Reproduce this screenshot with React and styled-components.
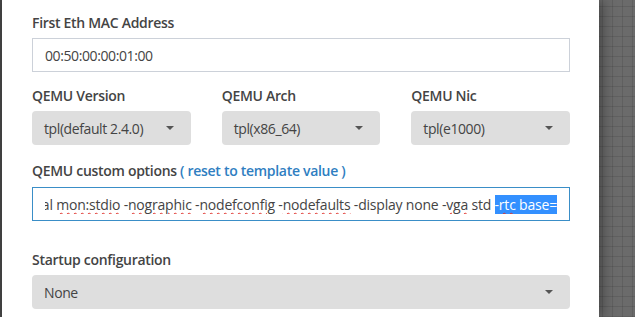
import React from "react";
import styled, { createGlobalStyle } from "styled-components";

const Global = createGlobalStyle`
  html, body { margin: 0; padding: 0; }
  body {
    width: 635px; height: 317px; overflow: hidden;
    font-family: "Open Sans", "Noto Sans", sans-serif;
  }
`;

const Page = styled.div`
  display: flex;
  width: 635px;
  height: 317px;
  background-color: #6b6b6b;
  background-image:
    linear-gradient(to right, rgba(0,0,0,0.10) 1px, transparent 1px),
    linear-gradient(to bottom, rgba(0,0,0,0.10) 1px, transparent 1px);
  background-size: 10px 10px;
  background-position: 2px 6px;
`;

const EdgeStrip = styled.div`
  width: 2px;
  flex: none;
  background: #454545;
`;

const Panel = styled.div`
  width: 597px;
  flex: none;
  background: #fff;
  box-sizing: border-box;
  padding: 13px 29px 0 30px;
  box-shadow: 4px 0 12px rgba(0,0,0,0.35);
  position: relative;
  z-index: 1;
`;

const Group = styled.div`
  margin-bottom: ${(p) => p.$mb ?? 14}px;
`;

const Label = styled.div`
  font-size: 14px;
  font-weight: 600;
  line-height: 20px;
  color: #444;
  margin-bottom: ${(p) => p.$mb ?? 5}px;
  letter-spacing: -0.3px;
`;

const Link = styled.span`
  color: #2f7ec1;
`;

const TextBox = styled.div`
  box-sizing: border-box;
  height: 34px;
  border: 1px solid ${(p) => (p.$focused ? "#3a8ec7" : "#ccd1d9")};
  padding: 0 12px;
  display: flex;
  align-items: center;
  font-size: 14px;
  color: #444;
  letter-spacing: -0.4px;
  background: #fff;
`;

const Scroller = styled.div`
  flex: 1;
  overflow: hidden;
  display: flex;
  justify-content: flex-end;
  white-space: nowrap;
  letter-spacing: -0.2px;
`;

const Spell = styled.span`
  text-decoration: underline wavy #e0302a;
  text-decoration-thickness: 1px;
  text-underline-offset: 2px;
`;

const Selected = styled.span`
  background: #3390ff;
  color: #fff;
`;

const Row = styled.div`
  display: grid;
  grid-template-columns: repeat(3, 1fr);
  column-gap: 31px;
`;

const Select = styled.div`
  box-sizing: border-box;
  height: 34px;
  border-radius: 4px;
  background: #dedede;
  padding: 0 12px;
  display: flex;
  align-items: center;
  justify-content: space-between;
  font-size: 14px;
  color: #444;
  letter-spacing: -0.4px;
`;

const Caret = styled.span`
  width: 0;
  height: 0;
  border-left: 4px solid transparent;
  border-right: 4px solid transparent;
  border-top: 4px solid #555;
  margin-right: 5px;
`;

const Field = ({ label, value, mb }) => (
  <Group $mb={mb}>
    <Label>{label}</Label>
    <Select>
      <span>{value}</span>
      <Caret />
    </Select>
  </Group>
);

export default function App() {
  return (
    <>
      <Global />
      <Page>
        <EdgeStrip />
        <Panel>
          <Group>
            <Label>First Eth MAC Address</Label>
            <TextBox>00:50:00:00:01:00</TextBox>
          </Group>
          <Row>
            <Field label="QEMU Version" value="tpl(default 2.4.0)" mb={16} />
            <Field label="QEMU Arch" value="tpl(x86_64)" mb={16} />
            <Field label="QEMU Nic" value="tpl(e1000)" mb={16} />
          </Row>
          <Group $mb={29}>
            <Label $mb={6}>
              QEMU custom options <Link>( reset to template value )</Link>
            </Label>
            <TextBox $focused>
              <Scroller>
                <span>
                  -serial <Spell>mon:stdio</Spell> -<Spell>nographic</Spell> -
                  <Spell>nodefconfig</Spell> -<Spell>nodefaults</Spell> -display
                  none -<Spell>vga</Spell> std{" "}
                  <Selected>
                    -<Spell>rtc</Spell> base=
                  </Selected>
                </span>
              </Scroller>
            </TextBox>
          </Group>
          <Field label="Startup configuration" value="None" />
        </Panel>
      </Page>
    </>
  );
}
